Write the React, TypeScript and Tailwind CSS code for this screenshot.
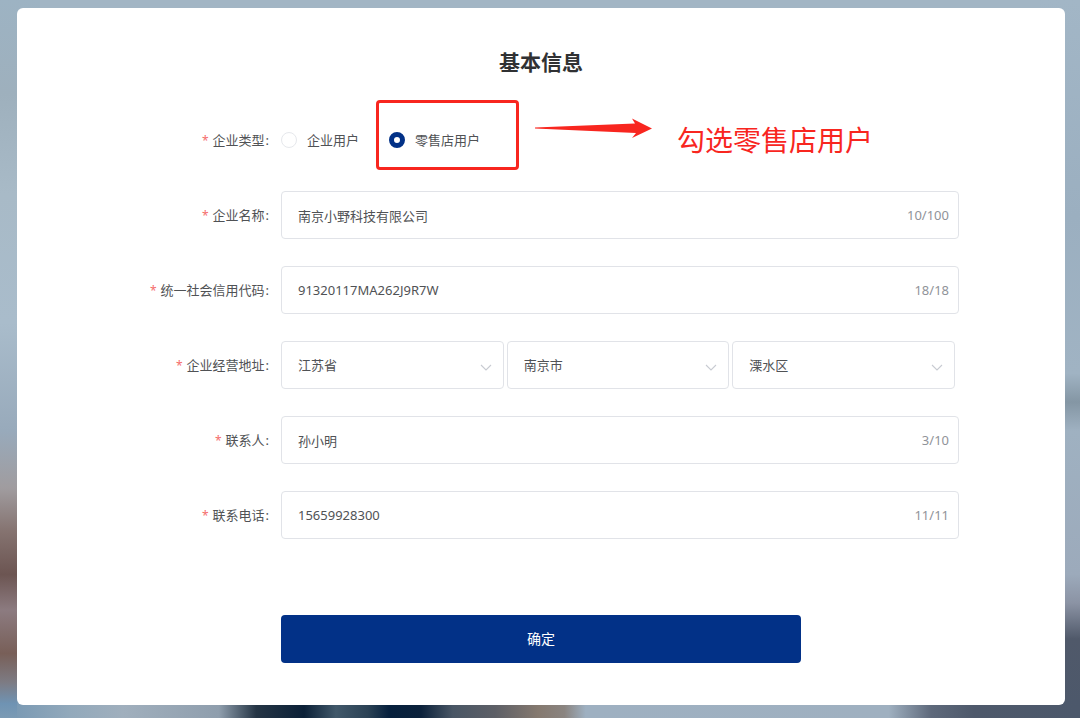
import { useState, type ReactNode } from "react";

const CONTROL =
  "h-12 w-full rounded border border-[#e1e3e8] bg-white pl-4 text-[13px] text-[#505255] outline-none focus:border-[#023187]";

function Row({
  label,
  htmlFor,
  children,
}: {
  label: string;
  htmlFor?: string;
  children: ReactNode;
}) {
  return (
    <div className="flex items-center gap-3">
      <label
        htmlFor={htmlFor}
        className="w-[146px] shrink-0 text-right text-[13px] leading-5 text-[#505255]"
      >
        <span className="mr-1 text-xs text-[#f56c6c]">*</span>
        {label}
        <span className="ml-px">:</span>
      </label>
      <div className="min-w-0 flex-1">{children}</div>
    </div>
  );
}

function TextField({
  id,
  label,
  value,
  max,
  onChange,
}: {
  id: string;
  label: string;
  value: string;
  max: number;
  onChange: (value: string) => void;
}) {
  return (
    <Row label={label} htmlFor={id}>
      <div className="relative">
        <input
          id={id}
          type="text"
          value={value}
          maxLength={max}
          onChange={(event) => onChange(event.target.value)}
          className={`${CONTROL} pr-16`}
        />
        <span className="pointer-events-none absolute inset-y-0 right-[10px] flex items-center pt-0.5 text-[13px] text-[#909399]">
          {value.length}/{max}
        </span>
      </div>
    </Row>
  );
}

function SelectField({
  label,
  options,
}: {
  label: string;
  options: string[];
}) {
  return (
    <div className="relative flex-1">
      <select
        aria-label={label}
        className={`${CONTROL} appearance-none pt-0.5 pr-8`}
      >
        {options.map((option) => (
          <option key={option}>{option}</option>
        ))}
      </select>
      <svg
        viewBox="0 0 12 12"
        className="pointer-events-none absolute top-5 right-3 size-3"
        fill="none"
        stroke="#c8cbd2"
        strokeWidth="1.1"
      >
        <path d="M1 4 6 9 11 4" />
      </svg>
    </div>
  );
}

function RadioOption({
  label,
  checked,
  onChange,
  highlighted = false,
}: {
  label: string;
  checked: boolean;
  onChange: () => void;
  highlighted?: boolean;
}) {
  return (
    <label className="relative flex items-center gap-[10px] text-[13px] leading-5 text-[#505255]">
      <input
        type="radio"
        name="company-type"
        checked={checked}
        onChange={onChange}
        className="size-4 appearance-none rounded-full border border-[#e6e8ec] bg-white checked:border-[5px] checked:border-[#023187]"
      />
      {label}
      {highlighted && (
        <span className="pointer-events-none absolute -top-[30px] -right-[39px] -left-[13px] h-[70px] rounded border-[3px] border-[#f8261f]" />
      )}
    </label>
  );
}

// Out-of-focus photo behind the card
function Backdrop() {
  return (
    <svg
      viewBox="0 0 1080 718"
      preserveAspectRatio="none"
      className="absolute inset-0 size-full"
      aria-hidden="true"
    >
      <defs>
        <linearGradient id="left" x1="0" y1="0" x2="0" y2="1">
          <stop offset="0" stopColor="#9db3c3" />
          <stop offset="0.13" stopColor="#9eb0bd" />
          <stop offset="0.27" stopColor="#a8bac7" />
          <stop offset="0.45" stopColor="#a9bccb" />
          <stop offset="0.6" stopColor="#98aabb" />
          <stop offset="0.68" stopColor="#a09c9f" />
          <stop offset="0.74" stopColor="#857370" />
          <stop offset="0.8" stopColor="#6c5552" />
          <stop offset="0.85" stopColor="#8c7b80" />
          <stop offset="0.91" stopColor="#785f58" />
          <stop offset="0.95" stopColor="#7d7b83" />
          <stop offset="0.98" stopColor="#6f93b3" />
          <stop offset="1" stopColor="#7b9ab4" />
        </linearGradient>
        <linearGradient id="right" x1="0" y1="0" x2="0" y2="1">
          <stop offset="0" stopColor="#a2b6c6" />
          <stop offset="0.3" stopColor="#9bafc0" />
          <stop offset="0.52" stopColor="#a0b3c3" />
          <stop offset="0.56" stopColor="#8496a4" />
          <stop offset="0.6" stopColor="#9fb1c1" />
          <stop offset="0.8" stopColor="#9caabb" />
          <stop offset="0.84" stopColor="#8b93a4" />
          <stop offset="0.89" stopColor="#50596a" />
          <stop offset="1" stopColor="#4c586b" />
        </linearGradient>
        <linearGradient id="bottom">
          <stop offset="0" stopColor="#7b9ab4" />
          <stop offset="0.05" stopColor="#92a9bb" />
          <stop offset="0.1" stopColor="#a0afbd" />
          <stop offset="0.19" stopColor="#8f9ead" />
          <stop offset="0.225" stopColor="#253545" />
          <stop offset="0.27" stopColor="#0b2037" />
          <stop offset="0.3" stopColor="#41586a" />
          <stop offset="0.33" stopColor="#2b4255" />
          <stop offset="0.35" stopColor="#06203d" />
          <stop offset="0.38" stopColor="#0b213b" />
          <stop offset="0.41" stopColor="#495665" />
          <stop offset="0.45" stopColor="#5d5f66" />
          <stop offset="0.49" stopColor="#85796f" />
          <stop offset="0.515" stopColor="#8a8480" />
          <stop offset="0.535" stopColor="#9eb0c1" />
          <stop offset="0.82" stopColor="#9fb0c0" />
          <stop offset="0.86" stopColor="#5e697b" />
          <stop offset="0.9" stopColor="#4e596b" />
          <stop offset="1" stopColor="#4c586b" />
        </linearGradient>
      </defs>
      <rect width="1080" height="718" fill="#a2b5c4" />
      <rect width="40" height="718" fill="url(#left)" />
      <rect x="1040" width="40" height="718" fill="url(#right)" />
      <rect x="17" y="700" width="1063" height="18" fill="url(#bottom)" />
    </svg>
  );
}

export default function App() {
  const [type, setType] = useState("retail");
  const [form, setForm] = useState({
    name: "南京小野科技有限公司",
    code: "91320117MA262J9R7W",
    contact: "孙小明",
    phone: "15659928300",
  });

  const update = (key: keyof typeof form) => (value: string) =>
    setForm((prev) => ({ ...prev, [key]: value }));

  return (
    <div
      lang="zh-CN"
      className="relative min-h-screen pt-2 pr-[15px] pb-[13px] pl-[17px] font-['Noto_Sans','Noto_Sans_CJK_SC',sans-serif]"
    >
      <Backdrop />
      <main className="relative rounded-md bg-white px-[106px] pt-10 pb-[42px]">
        <h1 className="text-center text-[21px] leading-7 font-bold text-[#303133]">
          基本信息
        </h1>
        <form
          className="mt-10"
          onSubmit={(event) => event.preventDefault()}
        >
          <div className="flex flex-col gap-[27px]">
            <Row label="企业类型">
              <div className="relative flex h-12 items-center gap-[30px]">
                <RadioOption
                  label="企业用户"
                  checked={type === "company"}
                  onChange={() => setType("company")}
                />
                <RadioOption
                  label="零售店用户"
                  checked={type === "retail"}
                  onChange={() => setType("retail")}
                  highlighted
                />
                <div className="pointer-events-none absolute top-0 left-[254px] flex gap-6 text-[#f8261f]">
                  <svg
                    viewBox="0 0 118 24"
                    className="h-6 w-[118px]"
                    fill="currentColor"
                  >
                    <path d="M0 11.5 100 7.5 97 2.5 117 12.5 97 22 101 17 0 12.5Z" />
                  </svg>
                  <p className="pt-1 text-[28px] leading-10 whitespace-nowrap">
                    勾选零售店用户
                  </p>
                </div>
              </div>
            </Row>
            <TextField
              id="name"
              label="企业名称"
              value={form.name}
              max={100}
              onChange={update("name")}
            />
            <TextField
              id="code"
              label="统一社会信用代码"
              value={form.code}
              max={18}
              onChange={update("code")}
            />
            <Row label="企业经营地址">
              <div className="flex gap-[3px] pr-1">
                <SelectField label="省" options={["江苏省"]} />
                <SelectField label="市" options={["南京市"]} />
                <SelectField label="区" options={["溧水区"]} />
              </div>
            </Row>
            <TextField
              id="contact"
              label="联系人"
              value={form.contact}
              max={10}
              onChange={update("contact")}
            />
            <TextField
              id="phone"
              label="联系电话"
              value={form.phone}
              max={11}
              onChange={update("phone")}
            />
          </div>
          <button
            type="submit"
            className="mx-auto mt-[76px] block h-12 w-full max-w-[520px] rounded bg-[#023187] text-sm text-white hover:bg-[#0a3d9e]"
          >
            确定
          </button>
        </form>
      </main>
    </div>
  );
}
